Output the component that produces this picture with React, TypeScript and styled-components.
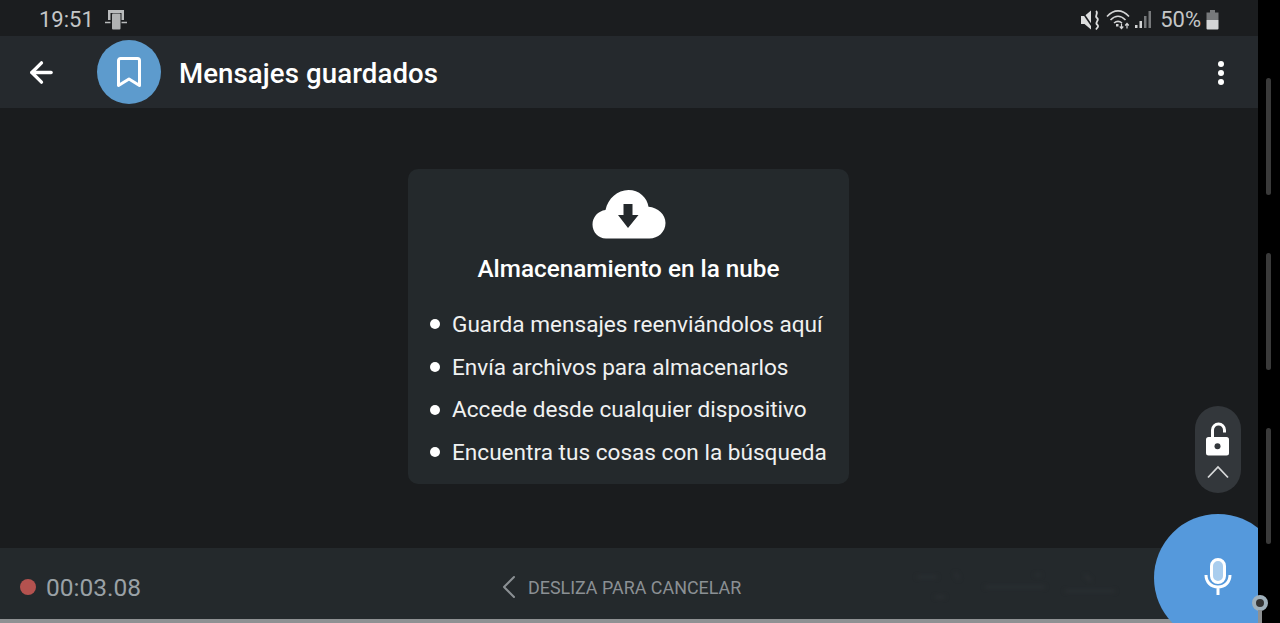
import React from "react";
import styled, { createGlobalStyle } from "styled-components";
import { ArrowLeft, ChevronLeft } from "lucide-react";

const GlobalStyle = createGlobalStyle`
  html, body {
    margin: 0;
    padding: 0;
    height: 100%;
    background: #000;
    overflow: hidden;
  }
  #root {
    height: 100%;
  }
`;

const Page = styled.div`
  display: flex;
  width: 1280px;
  height: 623px;
  background: #000;
  font-family: Roboto, "Liberation Sans", sans-serif;
`;

const Screen = styled.div`
  position: relative;
  width: 1258px;
  height: 623px;
  display: flex;
  flex-direction: column;
  overflow: hidden;
  background: #1a1c1e;
`;

const StatusBar = styled.div`
  flex: 0 0 36px;
  display: flex;
  align-items: center;
  justify-content: space-between;
  padding: 3px 39px 0 39px;
  box-sizing: border-box;
  background: #1b1d1f;
  color: #c4c6c7;
  font-size: 22px;
`;

const StatusGroup = styled.div`
  display: flex;
  align-items: center;
`;

const Clock = styled.span`
  margin-right: 11px;
`;

const Battery = styled.span`
  margin: 0 0 0 5px;
  display: flex;
`;

const WifiSignal = styled.svg`
  margin-left: 6px;
`;

const Percent = styled.span`
  margin-left: 8px;
`;

const Header = styled.div`
  flex: 0 0 72px;
  display: flex;
  align-items: center;
  padding: 0 34px 0 25px;
  box-sizing: border-box;
  background: #25292d;
`;

const Avatar = styled.div`
  width: 64px;
  height: 64px;
  margin-left: 39px;
  margin-right: 18px;
  border-radius: 50%;
  background: #5d9bcd;
  display: flex;
  align-items: center;
  justify-content: center;
`;

const Title = styled.div`
  flex: 1;
  padding-top: 3px;
  color: #fff;
  font-size: 27.6px;
  font-weight: 500;
  letter-spacing: 0.1px;
`;

const Dots = styled.div`
  display: flex;
  flex-direction: column;
  gap: 3px;
  padding-top: 2px;
`;

const Dot = styled.span`
  width: 6px;
  height: 6px;
  border-radius: 50%;
  background: #fff;
`;

const Chat = styled.div`
  flex: 1;
  display: flex;
  justify-content: center;
  padding-top: 61px;
  background: #1a1c1e;
`;

const Card = styled.div`
  width: 441px;
  height: 315px;
  margin-right: 1px;
  padding-top: 20px;
  box-sizing: border-box;
  border-radius: 10px;
  background: #24292c;
  display: flex;
  flex-direction: column;
  align-items: center;
  color: #fff;
`;

const CardTitle = styled.div`
  margin-top: 14px;
  font-size: 24.3px;
  line-height: 32px;
  font-weight: 500;
`;

const Bullets = styled.ul`
  list-style: none;
  margin: 18px 0 0 22px;
  padding: 0;
  align-self: flex-start;
`;

const Bullet = styled.li`
  display: flex;
  align-items: center;
  height: 42.7px;
  font-size: 22.6px;
  color: #f0f1f1;
  white-space: nowrap;

  &::before {
    content: "";
    width: 10px;
    height: 10px;
    margin-right: 12px;
    border-radius: 50%;
    background: #fff;
  }
`;

const BottomBar = styled.div`
  flex: 0 0 71px;
  display: flex;
  align-items: center;
  padding: 7px 0 0 20px;
  box-sizing: border-box;
  background: #24292c;
`;

const RecordDot = styled.span`
  width: 16px;
  height: 16px;
  border-radius: 50%;
  background: #b4524f;
`;

const Timer = styled.span`
  width: 450px;
  margin-left: 10px;
  color: #9aa1a6;
  font-size: 24.5px;
`;

const Cancel = styled.span`
  display: flex;
  align-items: center;
  width: 419px;
  color: #8b9094;
  font-size: 17.9px;
`;

const CancelChevron = styled(ChevronLeft)`
  margin: 0 -1px 0 -7px;
`;

const Residue = styled.svg`
  flex-shrink: 0;
  filter: blur(2px);
`;

const BottomEdge = styled.div`
  flex: 0 0 4px;
  background: #8e9193;
`;

const LockPill = styled.div`
  position: absolute;
  left: 1195px;
  top: 406px;
  width: 46px;
  height: 87px;
  border-radius: 23px;
  background: #33373b;
  display: flex;
  flex-direction: column;
  align-items: center;
`;

const LockIcon = styled.svg`
  margin-top: 16px;
`;

const LockChevron = styled.svg`
  margin-top: 9px;
`;

const MicButton = styled.div`
  position: absolute;
  left: 1154px;
  top: 514px;
  width: 128px;
  height: 128px;
  border-radius: 50%;
  background: #5599dc;
`;

const MicIcon = styled.svg`
  position: absolute;
  left: 49px;
  top: 44px;
`;

const Rail = styled.div`
  position: relative;
  flex: 1;
`;

const Thumb = styled.div<{ $top: number; $height: number }>`
  position: absolute;
  left: 8px;
  top: ${(p) => p.$top}px;
  width: 5px;
  height: ${(p) => p.$height}px;
  border-radius: 3px;
  background: #3a3a3a;
`;

const MapPin = styled.div`
  position: absolute;
  left: 1252px;
  top: 595px;
  width: 16px;
  height: 16px;
  box-sizing: border-box;
  border: 4px solid #9fb0bb;
  border-radius: 50%;
  background: #333;

  &::after {
    content: "";
    position: absolute;
    left: 2px;
    top: 11px;
    width: 4px;
    height: 13px;
    background: #8e9193;
  }
`;

const items = [
  "Guarda mensajes reenviándolos aquí",
  "Envía archivos para almacenarlos",
  "Accede desde cualquier dispositivo",
  "Encuentra tus cosas con la búsqueda",
];

const App = () => {
  return (
    <>
      <GlobalStyle />
      <Page>
        <Screen>
          <StatusBar>
            <StatusGroup>
              <Clock>19:51</Clock>
              <svg width="22" height="20" viewBox="0 0 22 20">
                <path d="M3 0h16v10h-2.500V3h-11v7H3z" fill="#b9bbbc" />
                <rect x="7" y="3.500" width="8.500" height="16" rx="1" fill="#b0b2b3" />
                <path d="M0 12.500h5.500M16.500 12.500H22" stroke="#b9bbbc" strokeWidth="1.500" />
              </svg>
            </StatusGroup>
            <StatusGroup>
              <svg width="20" height="20" viewBox="0 0 20 20">
                <path d="M1 6h3.500L11 .5v19L4.500 14H1z" fill="#dcdddd" />
                <path d="M1 0l13 19" stroke="#1b1d1f" strokeWidth="1.600" />
                <path d="M16 1c3 2.500-2 5 1 7s-2.500 4.500 0 6.500 0 3-1 5" stroke="#dcdddd" strokeWidth="1.800" fill="none" />
              </svg>
              <WifiSignal width="46" height="20" viewBox="0 0 46 20">
                <path d="M1 6.500c7-7.500 15-7.500 22 0M4.500 10c5-5 10-5 15 0M8 13c3-2.500 5-2.500 8 0" stroke="#d4d5d6" strokeWidth="1.600" fill="none" />
                <rect x="10" y="14" width="2.500" height="2.500" fill="#d4d5d6" />
                <path d="M15.500 13.500v5M13.700 16.500l1.800 2 1.800-2M21 18.500v-5M19.200 15.500l1.800-2 1.800 2" stroke="#d4d5d6" strokeWidth="1.200" fill="none" />
                <rect x="29" y="15" width="2.500" height="3" fill="#d4d5d6" />
                <rect x="33.500" y="11" width="2.500" height="7" fill="#d4d5d6" />
                <rect x="38" y="6" width="2.500" height="12" fill="#77797b" />
                <rect x="42.500" y="1" width="2.500" height="17" fill="#77797b" />
              </WifiSignal>
              <Percent>50%</Percent>
              <Battery>
                <svg width="13" height="20" viewBox="0 0 13 20">
                  <path d="M4 0h5v2.500h3.500V10H.5V2.500H4z" fill="#77797b" />
                  <path d="M.5 10h12v8.500a1 1 0 0 1-1 1h-10a1 1 0 0 1-1-1z" fill="#d4d5d6" />
                </svg>
              </Battery>
            </StatusGroup>
          </StatusBar>

          <Header>
            <ArrowLeft size={33} color="#fff" strokeWidth={2.400} />
            <Avatar>
              <svg width="26" height="32" viewBox="0 0 26 32">
                <path
                  d="M2.500 4.500a2 2 0 0 1 2-2h17a2 2 0 0 1 2 2v25l-10.500-6.500-10.500 6.500z"
                  stroke="#fff"
                  strokeWidth="3"
                  strokeLinejoin="round"
                  fill="none"
                />
              </svg>
            </Avatar>
            <Title>Mensajes guardados</Title>
            <Dots>
              <Dot />
              <Dot />
              <Dot />
            </Dots>
          </Header>

          <Chat>
            <Card>
              <svg width="74" height="50" viewBox="0 0 74 50">
                <path
                  d="M36.500 1c10.500 0 18.800 7.500 20 16.800C66 18.500 73.500 25.500 73.500 34c0 9-7.500 15.500-16 15.500H14C6 49.500.5 43 .5 35.500c0-7.500 5.500-13.500 13-14.500C16 9.500 25.500 1 36.500 1z"
                  fill="#fff"
                />
                <path d="M31.500 15h9v11h6L36 39 26 26h5.500z" fill="#24292c" />
              </svg>
              <CardTitle>Almacenamiento en la nube</CardTitle>
              <Bullets>
                {items.map((item) => (
                  <Bullet key={item}>{item}</Bullet>
                ))}
              </Bullets>
            </Card>
          </Chat>

          <BottomBar>
            <RecordDot />
            <Timer>00:03.08</Timer>
            <Cancel>
              <CancelChevron size={40} strokeWidth={1.200} />
              <span>DESLIZA PARA CANCELAR</span>
            </Cancel>
            <Residue width="240" height="44" viewBox="0 0 240 44">
              <path
                d="M2 12h20M40 8l4 6M20 32h10M70 22h60M120 10h6M150 26h50M170 10l6 6"
                stroke="#2d3235"
                strokeWidth="2"
                fill="none"
              />
            </Residue>
          </BottomBar>
          <BottomEdge />

          <LockPill>
            <LockIcon width="26" height="34" viewBox="0 0 26 34">
              <path d="M7.500 16V8a6 6 0 0 1 12 0v2.500" stroke="#fff" strokeWidth="3" fill="none" />
              <rect x="1" y="15" width="23" height="18.500" rx="2.500" fill="#fff" />
              <circle cx="12.500" cy="24.200" r="3" fill="#33373b" />
            </LockIcon>
            <LockChevron width="24" height="14" viewBox="0 0 24 14">
              <path d="M2 12.500L12 2l10 10.500" stroke="#d8d9da" strokeWidth="1.800" fill="none" />
            </LockChevron>
          </LockPill>

          <MicButton>
            <MicIcon width="30" height="38" viewBox="0 0 30 38">
              <rect x="8.500" y="1.500" width="13" height="23" rx="6.500" stroke="#fff" strokeWidth="3" fill="#a9cdee" />
              <path d="M3 17c0 7 5 12 12 12s12-5 12-12M15 29v8" stroke="#fff" strokeWidth="3" fill="none" />
            </MicIcon>
          </MicButton>
        </Screen>
        <Rail>
          <Thumb $top={78} $height={117} />
          <Thumb $top={253} $height={117} />
          <Thumb $top={428} $height={116} />
        </Rail>
        <MapPin />
      </Page>
    </>
  );
};

export default App;
